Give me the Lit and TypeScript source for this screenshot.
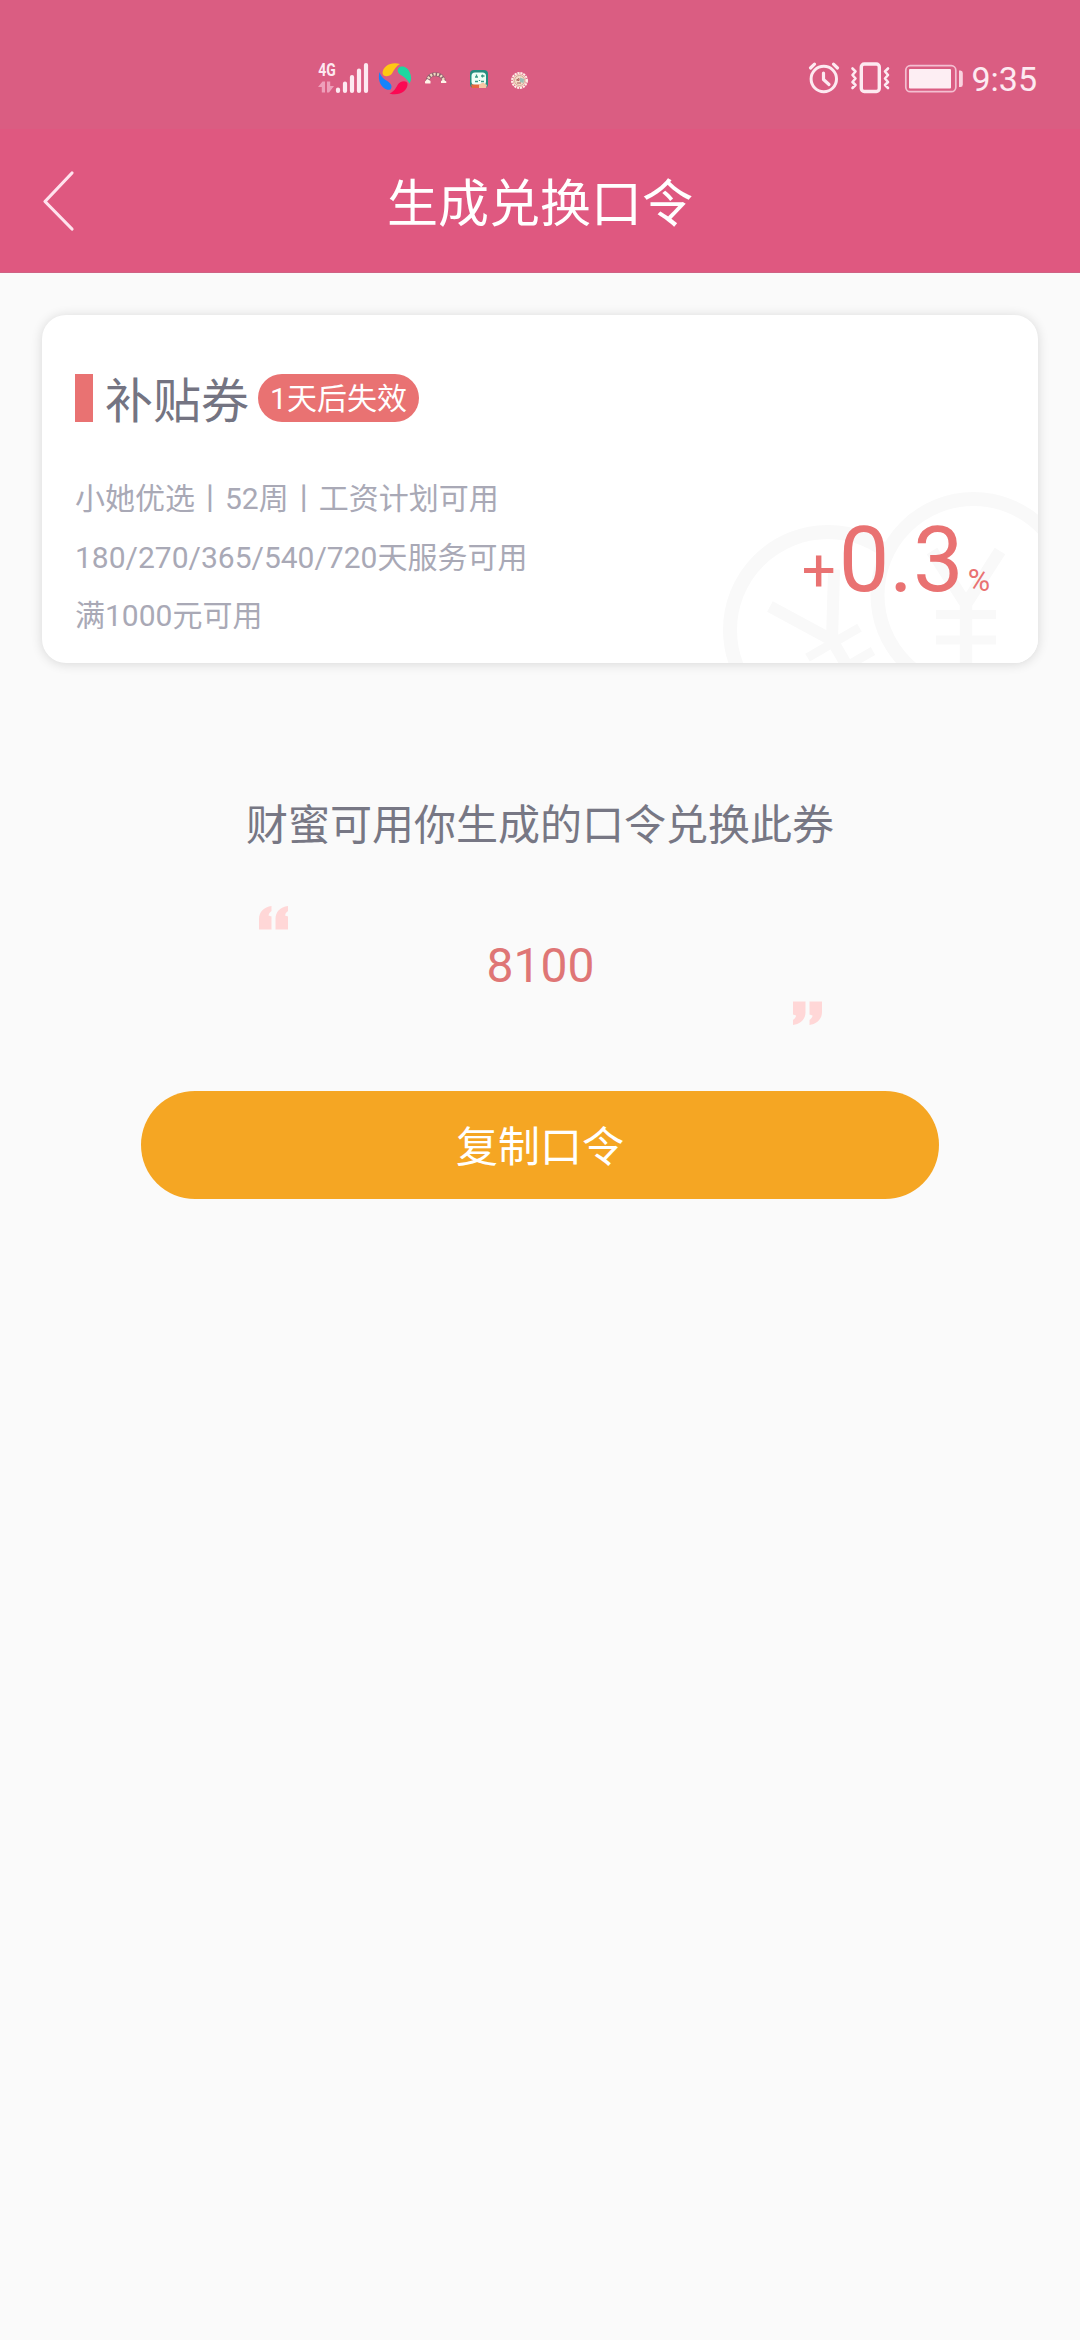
import { LitElement, html, css } from "lit";
import { customElement } from "lit/decorators.js";

@customElement("status-bar")
class StatusBar extends LitElement {
  static styles = css`
    :host {
      display: flex;
      box-sizing: border-box;
      height: 129px;
      padding: 57px 43px 0 318px;
      justify-content: space-between;
      background: #da5d82;
      color: #fdeaf1;
    }
    .side {
      display: flex;
      height: 42px;
    }
    .time {
      margin-left: 4px;
      font-size: 34px;
      line-height: 44px;
    }
    svg {
      display: block;
    }
    .net {
      font: 700 18.5px "Roboto", sans-serif;
      fill: #fdeaf1;
    }
  `;

  render() {
    return html`
      <div class="side">
        <svg width="215" height="42" viewBox="318 57 215 42" fill="none">
          <text class="net" x="318.300" y="76" textLength="17.500" lengthAdjust="spacingAndGlyphs">4G</text>
          <g fill="#ee9fba">
            <path d="M318 87l4.500-5.500h2.500V92.500h-3.200V87zM327 81.500h3.200V86h3.800l-5 6.500h-2z" />
          </g>
          <g stroke="#fdeaf1" stroke-width="4.2" stroke-linecap="round">
            <path d="M338 89.500v1.500M345 83.500v7.500M352 77v14M359 70.500v20.500M366 65v26" />
          </g>
          <path d="M382.500 73C383 66 391 61.500 400 64C396 66 394 70 392 73.500C389.500 77 383 77.500 382.500 73z" fill="#ffc814" />
          <path d="M398.500 68C402 65 408 67 410 73C412 78 411 81 409.500 83.500C407.500 79 403 76.500 400 74.500C397.500 72.500 397 70 398.500 68z" fill="#1dd8a0" />
          <path d="M379.500 72C381 77 384 79 388 81.500C391.500 84 392.500 87 390.500 89.500C387 91 381 87 379.500 81.500C378.500 78 378.800 74.500 379.500 72z" fill="#1683fb" />
          <path d="M407.500 83.500C408 91 399 96.500 389.500 93.500C394 91.500 396 88 397.500 85C399.500 81 406.500 79.500 407.500 83.500z" fill="#fb0953" />
          <path d="M427.500 82C428 71.500 443 71.500 444 82" stroke="#8f6070" stroke-width="4" />
          <path d="M427.500 82C428 71.500 443 71.500 444 82" stroke="#f0d9bf" stroke-width="2.800" stroke-dasharray="2 1.500" />
          <path d="M425 83v-1.500l2.500-2.500 3 2v2.500h-5zM441 83v-2l2.500-1.500 2.800 2V83z" fill="#fff4e8" />
          <rect x="470" y="70" width="18" height="18" rx="4" fill="#258e80" />
          <rect x="471.500" y="72.500" width="14.500" height="12.500" rx="3.500" fill="#effff7" />
          <path d="M476.500 74.500v3M475 77h3M482.500 74.500v3M481 76h3.500M475 81.500h3M481 81.500h3M479.500 80v1" stroke="#3a9a86" stroke-width="1.300" />
          <path d="M471 84.500h9v3.500h-8z" fill="#e6673f" />
          <path d="M479 84.500l4-2 4 2.500-1 3h-7z" fill="#f6c6a4" />
          <circle cx="519.500" cy="80.500" r="6.500" fill="#f5dcc9" />
          <circle cx="519.500" cy="80.500" r="7.500" stroke="#fff0e6" stroke-width="2" stroke-dasharray="2.200 .8" />
          <circle cx="519.500" cy="80.500" r="5" stroke="#d3ab98" stroke-width="1" />
          <path d="M520 77.500l4 1.500-.5 4-3.500-1z" fill="#9cc0b6" />
          <path d="M516.500 80l2.500-1.500v2zM517 83h4" stroke="#a85f59" stroke-width="1" />
        </svg>
      </div>
      <div class="side">
        <svg width="160" height="42" viewBox="806 57 160 42" fill="none" stroke="#fdeaf1">
          <circle cx="822.800" cy="79" r="12.700" stroke-width="3" />
          <path d="M822.500 73v6.500l5.500 5" stroke-width="3.200" stroke-linecap="round" stroke-linejoin="round" />
          <path d="M809.500 68l4-3.800M836.500 68l-4-3.800" stroke-width="3.200" stroke-linecap="round" />
          <rect x="860.300" y="64" width="18" height="27.500" rx="3" stroke-width="3.400" />
          <path d="M851.500 68.500l3 3-3 3.500 3 3.500-3 3.500 3 3-3 3M887 68.500l-3 3 3 3.500-3 3.500 3 3.500-3 3 3 3" stroke-width="2.600" stroke-linecap="round" stroke-linejoin="round" />
          <rect x="904.800" y="65.700" width="50" height="26" rx="4.500" stroke="#f4bfd1" stroke-width="1.700" />
          <rect x="908" y="69" width="42" height="19.500" rx="1" fill="#fdeef3" stroke="none" />
          <path d="M958 70.500h1.500q2.300 0 2.300 2.500v11.500q0 2.500-2.300 2.500H958z" fill="#f9d3e0" stroke="none" />
        </svg>
        <span class="time">9:35</span>
      </div>
    `;
  }
}

@customElement("nav-bar")
class NavBar extends LitElement {
  static styles = css`
    :host {
      display: grid;
      grid-template-columns: 110px 1fr 110px;
      align-items: center;
      box-sizing: border-box;
      height: 144px;
      background: #df5880;
      border-bottom: 1px solid #cf6284;
    }
    svg {
      display: block;
      margin-left: 40px;
    }
    .title {
      padding-top: 9px;
      text-align: center;
      font-size: 51px;
      line-height: 60px;
      color: #fff;
    }
  `;

  render() {
    return html`
      <svg width="36" height="64" viewBox="0 0 36 64" fill="none">
        <path d="M32 4L5 32.500L32 60" stroke="#ffe3ee" stroke-width="3.200" stroke-linecap="round" stroke-linejoin="round" />
      </svg>
      <div class="title">生成兑换口令</div>
    `;
  }
}

@customElement("coupon-card")
class CouponCard extends LitElement {
  static styles = css`
    :host {
      display: flex;
      flex-direction: column;
      position: relative;
      box-sizing: border-box;
      height: 348px;
      margin: 42px 42px 0;
      padding: 59px 48px 0 33px;
      border-radius: 24px;
      background: #fff;
      box-shadow: 0 1px 12px rgba(0, 0, 0, 0.14);
      overflow: hidden;
    }
    .mark {
      position: absolute;
      right: 0;
      bottom: 0;
    }
    .head {
      display: flex;
      align-items: center;
      height: 48px;
    }
    .bar {
      width: 18px;
      height: 48px;
      background: #e97272;
    }
    .name {
      margin-left: 12px;
      padding-top: 8px;
      font-size: 48px;
      line-height: 48px;
      color: #747482;
    }
    .tag {
      box-sizing: border-box;
      width: 161px;
      height: 48px;
      margin-left: 9px;
      border-radius: 24px;
      text-align: center;
      font-size: 30px;
      line-height: 50px;
      color: #fff;
      background: #e97272;
    }
    .body {
      position: relative;
      display: flex;
      justify-content: space-between;
      margin-top: 48px;
    }
    .terms {
      display: grid;
      grid-template-rows: 59px 58px 56px;
      font-size: 30px;
      line-height: 58px;
      color: #a9a9b6;
    }
    .rate {
      display: flex;
      align-items: baseline;
      margin-top: 38px;
      height: 106px;
      line-height: 106px;
      color: #e97272;
    }
    .sign {
      font-size: 60px;
      margin-right: 3px;
    }
    .value {
      font-size: 90px;
    }
    .unit {
      font-size: 30.5px;
      margin-left: 4px;
    }
  `;

  render() {
    return html`
      <svg class="mark" width="320" height="175" viewBox="718 488 320 175" fill="none" stroke="#f9f9f9">
        <g stroke-width="14">
          <circle cx="828" cy="630" r="98" />
          <g transform="translate(832 640) rotate(-30)" stroke-width="12">
            <path d="M-37-60L0 0L37-60M0 0V50" />
            <path d="M-30 3H30M-30 30H30" stroke-width="9" />
          </g>
        </g>
        <circle cx="973.500" cy="595" r="96" stroke-width="14" fill="#fff" />
        <path d="M932 551L966 604L1000 551M966 600V663" stroke-width="12.500" />
        <path d="M936 614.500h60M936 640h60" stroke-width="9" />
      </svg>
      <div class="head">
        <div class="bar"></div>
        <div class="name">补贴券</div>
        <div class="tag">1天后失效</div>
      </div>
      <div class="body">
        <div class="terms">
          <div>小她优选丨52周丨工资计划可用</div>
          <div>180/270/365/540/720天服务可用</div>
          <div>满1000元可用</div>
        </div>
        <div class="rate">
          <span class="sign">+</span><span class="value">0.3</span><span class="unit">%</span>
        </div>
      </div>
    `;
  }
}

@customElement("app-root")
class AppRoot extends LitElement {
  static styles = css`
    :host {
      display: block;
      height: 2340px;
      background: #fafafa;
      font-family: "Roboto", "Noto Sans CJK SC", sans-serif;
    }
    .hint {
      margin-top: 133px;
      text-align: center;
      font-size: 42px;
      line-height: 60px;
      color: #777784;
    }
    .code {
      display: grid;
      grid-template-columns: 29px 1fr 29px;
      height: 119px;
      margin: 50px 258px 0 259px;
    }
    .close {
      align-self: end;
    }
    .digits {
      align-self: center;
      padding-top: 1px;
      text-align: center;
      font-size: 48px;
      line-height: 56px;
      color: #df7676;
    }
    .copy {
      display: block;
      box-sizing: border-box;
      width: 798px;
      height: 108px;
      margin: 66px auto 0;
      padding: 5px 0 0;
      border: 0;
      border-radius: 54px;
      background: #f5a623;
      color: #fff;
      font: inherit;
      font-size: 42px;
      line-height: 103px;
    }
  `;

  render() {
    const quote =
      "M0 23.500V13C0 6 5 1 12.500 0V5Q9.500 7 9.500 9.500L12.500 10.500V23.500zM16.500 23.500V13C16.500 6 21 1 29 0V5Q26 7 26 9.500L29 10.500V23.500z";
    return html`
      <status-bar></status-bar>
      <nav-bar></nav-bar>
      <coupon-card></coupon-card>
      <div class="hint">财蜜可用你生成的口令兑换此券</div>
      <div class="code">
        <svg width="29" height="24" viewBox="0 0 29 24"><path d=${quote} fill="#ffd7d7" /></svg>
        <div class="digits">8100</div>
        <svg class="close" width="29" height="24" viewBox="0 0 29 24">
          <path d=${quote} fill="#ffd7d7" transform="rotate(180 14.500 12)" />
        </svg>
      </div>
      <button class="copy">复制口令</button>
    `;
  }
}
